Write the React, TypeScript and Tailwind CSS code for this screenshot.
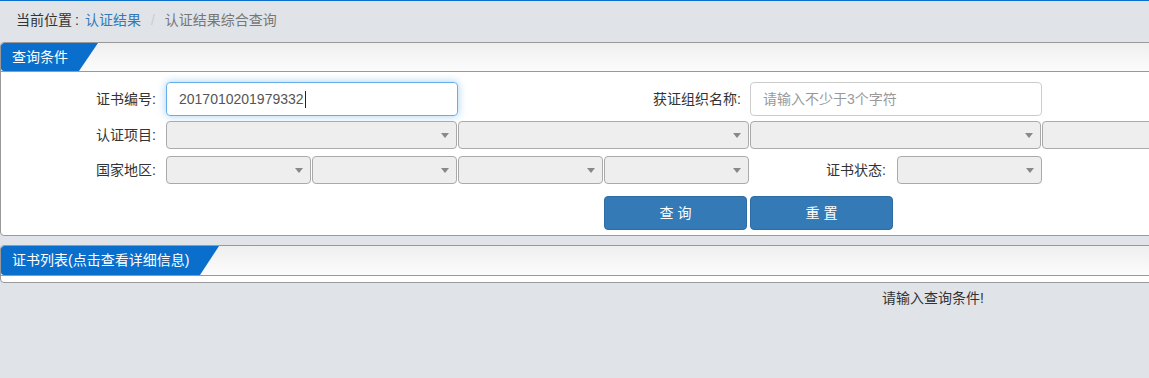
import React from "react";

const font = "font-['Liberation_Sans','Noto_Sans_CJK_SC',sans-serif]";

function Select({ w }: { w: string }) {
  return (
    <div className={`${w} h-[28px] shrink-0 rounded-[4px] border border-[#aaa] bg-[#eee] flex items-center justify-end pr-[7px]`}>
      <div className="w-0 h-0 border-x-[4px] border-x-transparent border-t-[5px] border-t-[#888]" />
    </div>
  );
}

function PanelHeader({ title, tabW, h }: { title: string; tabW: string; h: string }) {
  return (
    <div className={`${h} border-b border-[#999] bg-gradient-to-b from-[#efefef] to-[#fcfcfc] flex`}>
      <div
        className={`${tabW} h-full bg-[#0a6fcc] rounded-l-[3px] text-white text-[14px] flex items-center pl-[11px] [clip-path:polygon(0_0,100%_0,calc(100%-19px)_100%,0_100%)]`}
      >
        {title}
      </div>
    </div>
  );
}

export default function App() {
  return (
    <div className={`w-[1149px] h-[378px] overflow-hidden bg-[#e0e4e9] ${font} text-[14px] text-[#333]`}>
      <div className="h-[1px] bg-[#0a6fcc]" />
      <div className="h-[41px] pl-[16px] pt-[9px] leading-[20px] flex">
        <span>当前位置</span>
        <span className="pl-[3px] pr-[6px]">:</span>
        <span className="text-[#337ab7]">认证结果</span>
        <span className="px-[10px] text-[#ccc]">/</span>
        <span className="text-[#777]">认证结果综合查询</span>
      </div>

      {/* Panel 1 */}
      <div className="w-[1200px] border border-[#999] rounded-l-[4px] bg-white overflow-hidden">
        <PanelHeader title="查询条件" tabW="w-[97px]" h="h-[29px]" />
        <div className="pt-[10px] pb-[5px]">
          {/* row 1 */}
          <div className="flex h-[34px] items-center">
            <div className="w-[165px] shrink-0 text-right pr-[10px]">证书编号:</div>
            <div className="w-[292px] h-[34px] shrink-0 rounded-[4px] border border-[#66afe9] shadow-[0_0_8px_rgba(102,175,233,0.6)] px-[12px] flex items-center text-[#555]">
              <span>2017010201979332</span>
              <span className="inline-block w-[1px] h-[17px] bg-[#222] ml-[1px]" />
            </div>
            <div className="w-[292px] shrink-0 text-right pr-[9px]">获证组织名称:</div>
            <div className="w-[292px] h-[34px] shrink-0 rounded-[4px] border border-[#ccc] px-[12px] flex items-center text-[#999]">
              请输入不少于3个字符
            </div>
          </div>
          {/* row 2 */}
          <div className="flex h-[28px] items-center mt-[5px] gap-[1px]">
            <div className="w-[164px] shrink-0 text-right pr-[9px]">认证项目:</div>
            <Select w="w-[291px]" />
            <Select w="w-[291px]" />
            <Select w="w-[291px]" />
            <Select w="w-[291px]" />
          </div>
          {/* row 3 */}
          <div className="flex h-[28px] items-center mt-[7px] gap-[1px]">
            <div className="w-[164px] shrink-0 text-right pr-[9px]">国家地区:</div>
            <Select w="w-[145px]" />
            <Select w="w-[145px]" />
            <Select w="w-[145px]" />
            <Select w="w-[145px]" />
            <div className="w-[146px] shrink-0 text-right pr-[10px]">证书状态:</div>
            <Select w="w-[145px]" />
          </div>
          {/* row 4 */}
          <div className="flex h-[34px] mt-[12px] pl-[603px] gap-[3px]">
            <button className="w-[143px] h-[34px] rounded-[4px] border border-[#2e6da4] bg-[#337ab7] text-white text-[14px]">
              查 询
            </button>
            <button className="w-[143px] h-[34px] rounded-[4px] border border-[#2e6da4] bg-[#337ab7] text-white text-[14px]">
              重 置
            </button>
          </div>
        </div>
      </div>

      {/* Panel 2 */}
      <div className="w-[1200px] mt-[9px] border border-[#999] rounded-l-[4px] bg-white overflow-hidden">
        <PanelHeader title="证书列表(点击查看详细信息)" tabW="w-[218px]" h="h-[30px]" />
        <div className="h-[6px]" />
      </div>

      <div className="pl-[882px] mt-[5px] leading-[20px] text-[#333]">请输入查询条件!</div>
    </div>
  );
}
